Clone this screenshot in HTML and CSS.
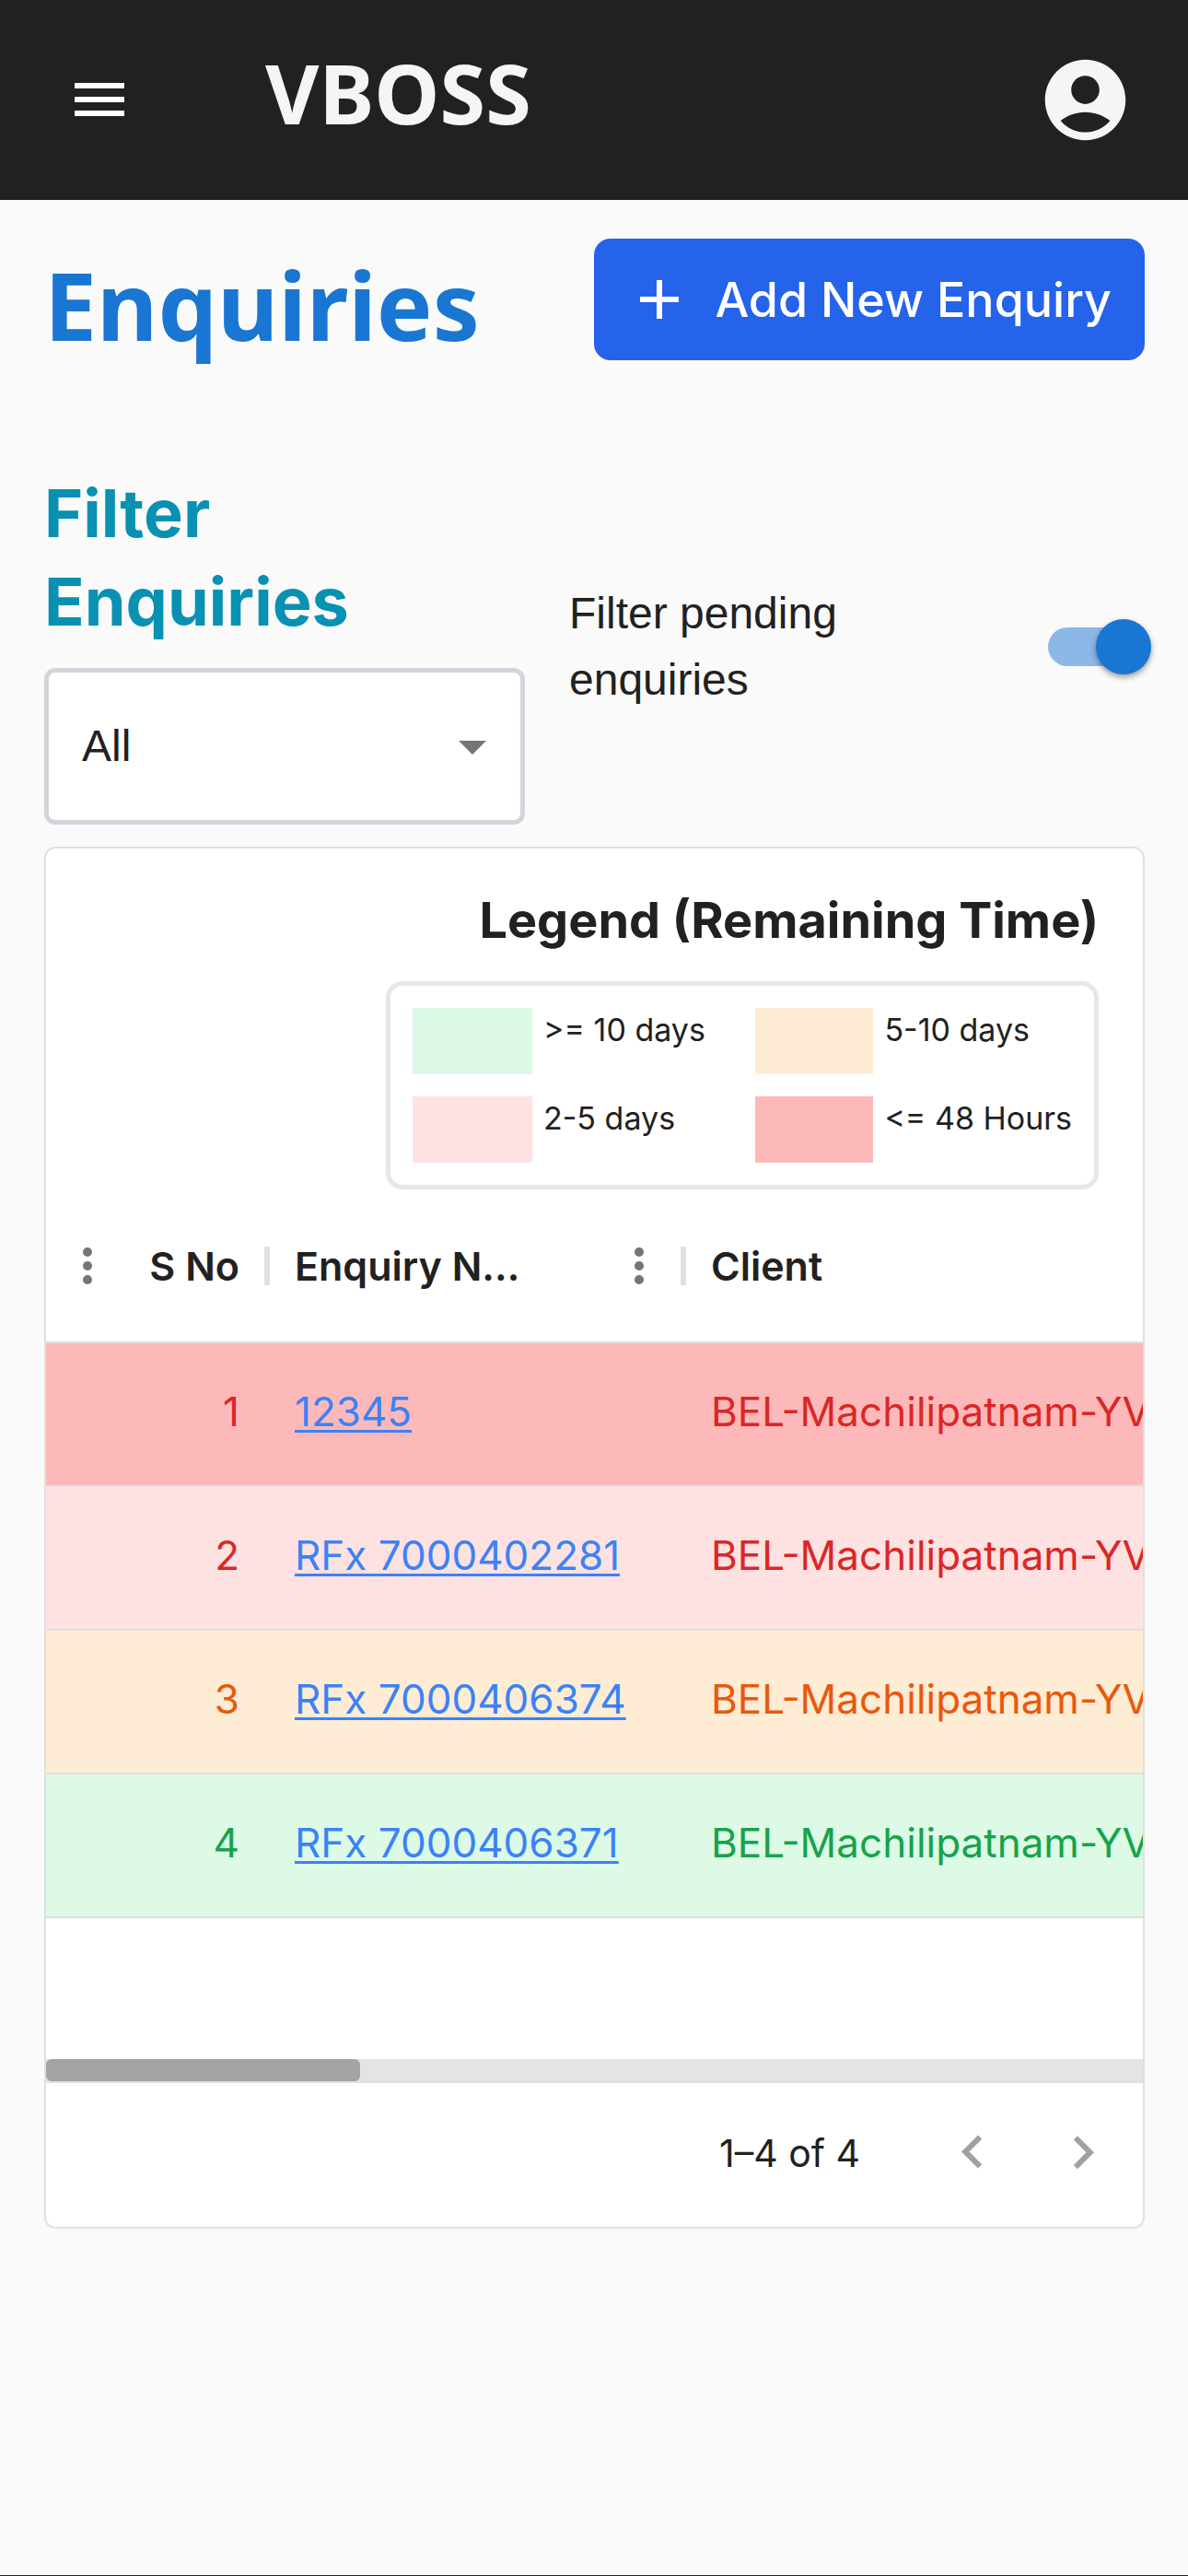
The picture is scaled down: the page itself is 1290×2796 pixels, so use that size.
FILE: index.html
```html
<!DOCTYPE html>
<html lang="en">
<head>
<meta charset="utf-8">
<meta name="viewport" content="width=device-width, initial-scale=1">
<title>VBOSS – Enquiries</title>
<link rel="stylesheet" href="styles.css">
</head>
<body>
<div class="page">
  <header class="app-bar">
    <button class="icon-btn" type="button" aria-label="Open menu">
      <svg class="icon" viewBox="0 0 24 24" aria-hidden="true"><path d="M3 18h18v-2H3zm0-5h18v-2H3zm0-7v2h18V6z"/></svg>
    </button>
    <a class="brand" href="#">VBOSS</a>
    <button class="icon-btn account" type="button" aria-label="Account">
      <svg class="icon-lg" viewBox="0 0 24 24" aria-hidden="true"><path d="M12 2C6.48 2 2 6.48 2 12s4.48 10 10 10 10-4.48 10-10S17.52 2 12 2m0 4c1.93 0 3.5 1.57 3.5 3.5S13.93 13 12 13s-3.5-1.57-3.5-3.5S10.07 6 12 6m0 14c-2.03 0-4.43-.82-6.14-2.88C7.55 15.8 9.68 15 12 15s4.45.8 6.14 2.12C16.43 19.18 14.03 20 12 20"/></svg>
    </button>
  </header>

  <main class="content">
    <div class="title-row">
      <h1 class="title">Enquiries</h1>
      <button class="add-btn" type="button">
        <svg class="icon" viewBox="0 0 24 24" aria-hidden="true"><path d="M19 13h-6v6h-2v-6H5v-2h6V5h2v6h6z"/></svg>
        <span>Add New Enquiry</span>
      </button>
    </div>

    <div class="filters">
      <div class="filter-field">
        <label class="filter-label" for="status">Filter Enquiries</label>
        <div class="select-wrap">
          <select class="select" id="status">
            <option>All</option>
          </select>
          <svg class="select-arrow" viewBox="0 0 24 24" aria-hidden="true"><path d="m7 10 5 5 5-5z"/></svg>
        </div>
      </div>
      <div class="pending">
        <label class="pending-label" for="pending">Filter pending enquiries</label>
        <input class="switch" id="pending" type="checkbox" role="switch" checked>
      </div>
    </div>

    <section class="card">
      <div class="legend">
        <h2 class="legend-title">Legend (Remaining Time)</h2>
        <div class="legend-box">
          <span class="swatch safe"></span><span>&gt;= 10 days</span>
          <span class="swatch soon"></span><span>5-10 days</span>
          <span class="swatch near"></span><span>2-5 days</span>
          <span class="swatch urgent"></span><span>&lt;= 48 Hours</span>
        </div>
      </div>

      <div class="scroller">
        <table class="grid">
          <thead>
            <tr>
              <th class="col-no" scope="col"><div class="head">
                <button class="more" type="button" aria-label="S No column menu"><svg viewBox="0 0 24 24" aria-hidden="true"><circle cx="12" cy="6" r="2"/><circle cx="12" cy="12" r="2"/><circle cx="12" cy="18" r="2"/></svg></button>
                <span class="head-text">S No</span><span class="sep"></span>
              </div></th>
              <th class="col-enq" scope="col"><div class="head">
                <span class="head-text">Enquiry N…</span>
                <button class="more" type="button" aria-label="Enquiry column menu"><svg viewBox="0 0 24 24" aria-hidden="true"><circle cx="12" cy="6" r="2"/><circle cx="12" cy="12" r="2"/><circle cx="12" cy="18" r="2"/></svg></button>
                <span class="sep"></span>
              </div></th>
              <th class="col-client" scope="col"><div class="head"><span class="head-text">Client</span></div></th>
            </tr>
          </thead>
          <tbody>
            <tr class="row urgent"><td class="num">1</td><td><a href="#">12345</a></td><td>BEL-Machilipatnam-YV</td></tr>
            <tr class="row near"><td class="num">2</td><td><a href="#">RFx 7000402281</a></td><td>BEL-Machilipatnam-YV</td></tr>
            <tr class="row soon"><td class="num">3</td><td><a href="#">RFx 7000406374</a></td><td>BEL-Machilipatnam-YV</td></tr>
            <tr class="row safe"><td class="num">4</td><td><a href="#">RFx 7000406371</a></td><td>BEL-Machilipatnam-YV</td></tr>
          </tbody>
        </table>
      </div>
      <div class="scrollbar"><div class="scroll-thumb"></div></div>

      <div class="pager">
        <span class="pager-text">1–4 of 4</span>
        <button class="pager-btn" type="button" disabled aria-label="Previous page"><svg class="icon" viewBox="0 0 24 24" aria-hidden="true"><path d="M15.41 16.09l-4.58-4.59 4.58-4.59L14 5.5l-6 6 6 6z"/></svg></button>
        <button class="pager-btn" type="button" disabled aria-label="Next page"><svg class="icon" viewBox="0 0 24 24" aria-hidden="true"><path d="M8.59 16.34l4.58-4.59-4.58-4.59L10 5.75l6 6-6 6z"/></svg></button>
      </div>
    </section>
  </main>
</div>
</body>
</html>
```
FILE: styles.css
```css
*, *::before, *::after { box-sizing: border-box; }

body {
  margin: 0;
  background: #fafafa;
  color: #212121;
  font-family: Inter, sans-serif;
}

button {
  border: 0;
  margin: 0;
  padding: 0;
  background: none;
  color: inherit;
  font: inherit;
}

svg { display: block; fill: currentColor; }

.icon { width: 72px; height: 72px; flex: none; }
.icon-lg { width: 105px; height: 105px; }

.page {
  min-height: 100vh;
  border-bottom: 1px solid #212121;
}

/* App bar */
.app-bar {
  display: flex;
  align-items: center;
  height: 217px;
  padding: 0 59px 1px 72px;
  background: #212121;
  color: #fff;
}

.brand {
  margin-left: 144px;
  padding-bottom: 16px;
  color: #f5f5f5;
  font: 700 90px/120px "Noto Sans", sans-serif;
  text-decoration: none;
}

.account { margin-left: auto; color: #f5f5f5; }

.content { padding: 42px 47px 42px 48px; }

/* Title */
.title-row {
  display: flex;
  justify-content: space-between;
  align-items: flex-start;
}

.title {
  margin: 0;
  color: #1976d2;
  font: 700 102px/144px "Noto Sans", sans-serif;
}

.add-btn {
  display: flex;
  align-items: center;
  gap: 24px;
  height: 132px;
  padding: 0 36px 0 35px;
  border-radius: 18px;
  background: #2563eb;
  color: #fff;
  font-weight: 500;
  font-size: 52px;
}

/* Filters */
.filters {
  display: flex;
  align-items: center;
  gap: 48px;
  margin-top: 106px;
}

.filter-field { flex: 0 0 522px; }

.filter-label {
  display: block;
  margin-bottom: 24px;
  padding-right: 48px;
  color: #0891b2;
  font-weight: 700;
  font-size: 72px;
  line-height: 96px;
}

.select-wrap { position: relative; }

.select {
  display: block;
  width: 100%;
  height: 170px;
  padding: 0 36px 2px;
  border: 5px solid #d1d5db;
  border-radius: 12px;
  appearance: none;
  background: #fff;
  color: #212121;
  font: 48px "Liberation Sans", Arial, sans-serif;
}

.select-arrow {
  position: absolute;
  top: 50%;
  right: 21px;
  width: 72px;
  height: 72px;
  margin-top: -36px;
  color: #757575;
  pointer-events: none;
}

.pending {
  display: flex;
  flex: 1;
  align-items: center;
  justify-content: space-between;
}

.pending-label {
  width: 320px;
  font: 48px/72px "Liberation Sans", Arial, sans-serif;
}

.switch {
  display: flex;
  align-items: center;
  justify-content: flex-end;
  width: 102px;
  height: 42px;
  margin: 0 3px 0 0;
  border-radius: 21px;
  appearance: none;
  background: #8cb8e8;
}

.switch::before {
  content: "";
  flex: none;
  width: 60px;
  height: 60px;
  margin-right: -10px;
  border-radius: 50%;
  background: #1976d2;
  box-shadow: 0 3px 6px rgba(0, 0, 0, .4);
}

/* Card */
.card {
  margin-top: 24px;
  border: 2px solid #e0e0e0;
  border-radius: 12px;
  background: #fff;
  overflow: hidden;
}

.legend {
  display: flex;
  flex-direction: column;
  align-items: flex-end;
  padding: 36px 48px 0;
}

.legend-title {
  margin: 0 0 24px;
  font-weight: 700;
  font-size: 54px;
  line-height: 84px;
}

.legend-box {
  display: grid;
  grid-template-columns: 130px 1fr 128px auto;
  gap: 24px 12px;
  width: 774px;
  padding: 24px;
  border: 5px solid #e5e7eb;
  border-radius: 18px;
  font-size: 34px;
  line-height: 48px;
}

.swatch { height: 72px; }
.safe { background: #dcfae6; }
.soon { background: #ffecd5; }
.near { background: #fee2e2; }
.urgent { background: #fdb9b9; }

/* Data grid */
.scroller {
  min-height: 944px;
  overflow: hidden;
}

.grid {
  width: 1700px;
  border-collapse: collapse;
  table-layout: fixed;
  font-size: 44px;
}

.col-no { width: 243px; }
.col-enq { width: 452px; }

th {
  height: 166px;
  padding: 0;
  border-bottom: 2px solid #e0e0e0;
  font-weight: 600;
  font-size: 43px;
  text-align: left;
}

.head { display: flex; align-items: center; }
.head-text { margin-left: 27px; }
.more { color: #757575; }
.more svg { width: 60px; height: 60px; }
.sep { width: 6px; height: 42px; background: #e0e0e0; }

.col-no .more { margin-left: 15px; }
.col-no .head-text { margin-left: auto; margin-right: 27px; }
.col-enq .more { margin-left: auto; margin-right: 15px; }

td {
  height: 156px;
  padding: 0 27px 6px;
  border-bottom: 2px solid #e0e0e0;
  white-space: nowrap;
}

.num { padding-right: 33px; text-align: right; }

.row a {
  color: #3b82f6;
  text-decoration-thickness: 3px;
  text-underline-offset: 4px;
  text-decoration-skip-ink: none;
}

.row.urgent, .row.near { color: #dc2626; }
.row.soon { color: #ea580c; }
.row.safe { color: #16a34a; }

.scrollbar {
  height: 26px;
  border-bottom: 2px solid #e0e0e0;
  background: #e4e4e4;
}

.scroll-thumb {
  width: 341px;
  height: 24px;
  border-radius: 6px;
  background: #a3a3a3;
}

.pager {
  display: flex;
  align-items: center;
  justify-content: flex-end;
  height: 156px;
  padding: 0 5px 5px 0;
}

.pager-text {
  margin-right: 62px;
  font-size: 41px;
}

.pager-btn { padding: 24px; color: #a0a0a0; }
```
